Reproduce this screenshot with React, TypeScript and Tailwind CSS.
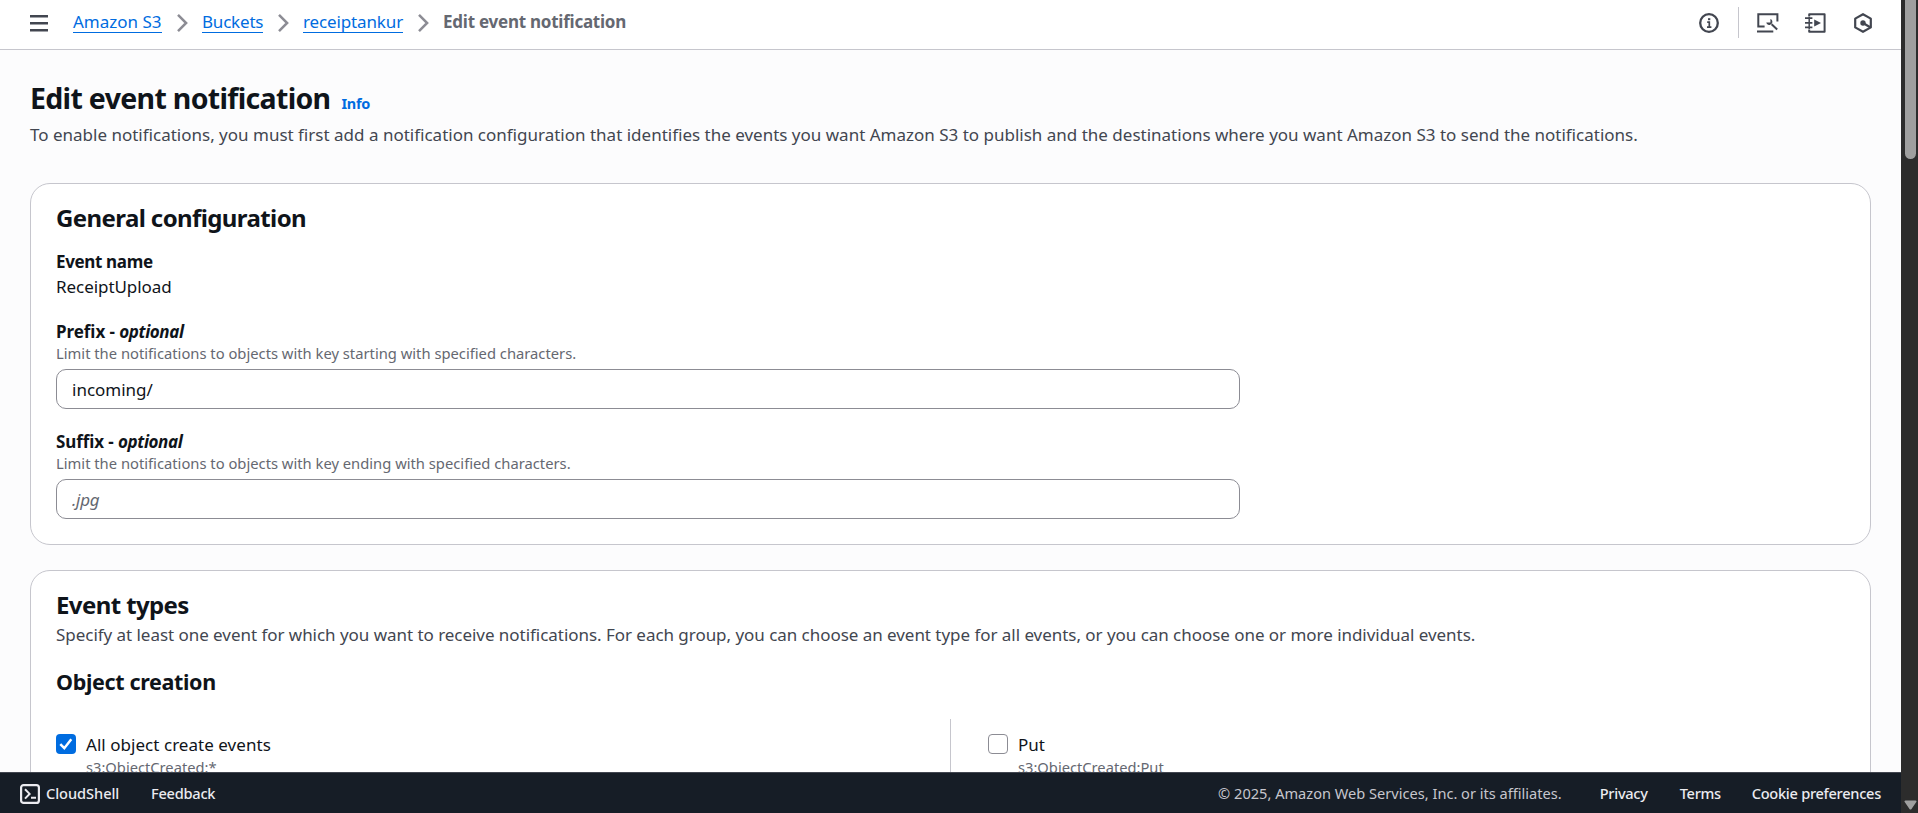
import type { ReactNode } from "react";

function Crumb({ children, className }: { children: ReactNode; className: string }) {
  return (
    <a href="#" className={`block h-[22px] border-b border-[#006ce0] leading-[22px] whitespace-nowrap text-[#006ce0] ${className}`}>
      {children}
    </a>
  );
}

function Chevron({ className }: { className: string }) {
  return (
    <svg className={`h-[20px] w-[20px] shrink-0 ${className}`} viewBox="0 0 16 16" fill="none" stroke="#8c8c94" strokeWidth="2">
      <path d="m4 1.5 6.5 6.5L4 14.5" />
    </svg>
  );
}

function Field({ label, labelClass, hint, value, placeholder }: { label: string; labelClass: string; hint: string; value?: string; placeholder?: string }) {
  return (
    <div>
      <div className={`h-[25px] text-[17px] leading-[25px] font-bold ${labelClass}`}>
        {label} - <i className="tracking-[-0.4px]">optional</i>
      </div>
      <div className="h-[20px] text-[14.75px] leading-[19px] whitespace-nowrap text-[#656871]">{hint}</div>
      <input
        defaultValue={value}
        placeholder={placeholder}
        className="mt-[5px] block h-[40px] w-[1184px] rounded-[10px] border border-[#8c8c94] bg-white px-[15px] text-[17px] text-[#0f141a] outline-none placeholder:tracking-[-0.3px] placeholder:text-[#656871] placeholder:italic"
      />
    </div>
  );
}

function Option({ checked, label, event }: { checked?: boolean; label: string; event: string }) {
  return (
    <div className="flex gap-[10px]">
      {checked ? (
        <span className="mt-[2px] flex h-5 w-5 shrink-0 items-center justify-center rounded-[4px] bg-[#006ce0]">
          <svg className="h-5 w-5" viewBox="0 0 20 20" fill="none" stroke="#fff" strokeWidth="2.5">
            <path d="m4.3 10.2 4 4 7-9" />
          </svg>
        </span>
      ) : (
        <span className="mt-[2px] h-5 w-5 shrink-0 rounded-[4px] border border-[#8c8c94] bg-white" />
      )}
      <div className="whitespace-nowrap">
        <div className="h-[25px] text-[17px] leading-[25px] tracking-[0.04px]">{label}</div>
        <div className="h-[20px] text-[14.7px] leading-[20px] text-[#656871]">{event}</div>
      </div>
    </div>
  );
}

export default function App() {
  return (
    <div className="flex h-[813px] w-[1918px] overflow-hidden bg-[#fcfcfd] font-['Noto_Sans',sans-serif] text-[#0f141a]">
      <div className="flex h-full w-[1901px] flex-col">
        <header className="flex h-[50px] shrink-0 items-start border-b border-[#c6c6cd] bg-white text-[17px]">
          <svg className="mt-[13px] ml-[29px] h-5 w-5" viewBox="0 0 20 20" fill="none" stroke="#424650" strokeWidth="2.5">
            <path d="M1 3.2h18M1 10.2h18M1 17.2h18" />
          </svg>
          <nav className="ml-6 flex pt-[11px]">
            <Crumb className="w-[89px]">Amazon S3</Crumb>
            <Chevron className="mt-[2px] ml-[11px]" />
            <Crumb className="ml-[9px] w-[61px] tracking-[-0.2px]">Buckets</Crumb>
            <Chevron className="mt-[2px] ml-[11px]" />
            <Crumb className="ml-[9px] w-[100px] tracking-[-0.13px]">receiptankur</Crumb>
            <Chevron className="mt-[2px] ml-[11px]" />
            <span className="ml-[9px] leading-[22px] font-bold tracking-[-0.24px] whitespace-nowrap text-[#656871]">Edit event notification</span>
          </nav>
          <div className="mr-[28px] ml-auto flex items-start text-[#424650]">
            <svg className="mt-[13px] h-5 w-5" viewBox="0 0 20 20" fill="none" stroke="currentColor" strokeWidth="2.3">
              <circle cx="10" cy="10" r="8.8" />
              <path d="M10.3 14.6V9.2H8.2M8 14.2h4.4" strokeWidth="1.7" />
              <path d="M9 5.2h2.3v2H9z" fill="currentColor" stroke="none" />
            </svg>
            <span className="mt-[7px] ml-[19px] h-[31px] w-px bg-[#c6c6cd]" />
            <svg className="mt-[12px] ml-[18px] h-[22px] w-[22px]" viewBox="0 0 22 22" fill="none" stroke="currentColor" strokeWidth="2">
              <path d="M20.4 9.5V2.2H1.3v12.4H7.6M0 19.6h16.3" />
              <path d="M14.6 12.2l5.6 5.2" strokeWidth="2" />
              <path d="M13.4 7v3.6H9.3c.3 1.7 2.2 2.8 3.9 2.1 1.9-.7 2.7-2.6 1.9-4.3-.3-.7-.9-1.2-1.7-1.4z" fill="currentColor" stroke="none" />
            </svg>
            <svg className="mt-[12px] ml-[26px] h-[22px] w-[22px]" viewBox="0 0 22 22" fill="none" stroke="currentColor" strokeWidth="2">
              <path d="M4.2 4.5V2.2h15.4v17.6H4.2v-2.3" strokeLinejoin="round" />
              <path d="M4.2 5v12" strokeWidth="1.5" />
              <path d="M0 6.2h7.4M0 10.8h7.4M0 15.4h7.4" strokeWidth="1.7" />
              <path d="m9.2 7.6 6.8 3.4-6.8 3.4z" fill="currentColor" stroke="none" />
            </svg>
            <svg className="mt-[12px] ml-[26px] h-[22px] w-5" viewBox="0 0 20 22" fill="none" stroke="currentColor" strokeWidth="2.2">
              <path d="M10 2.2 17.8 6.6v8.8L10 19.8 2.2 15.4V6.6z" strokeLinejoin="round" />
              <circle cx="10" cy="11" r="2.7" fill="currentColor" stroke="none" />
              <path d="m10 11 7.6 4.4" strokeWidth="2.3" />
            </svg>
          </div>
        </header>

        <main className="min-h-0 flex-1 overflow-hidden px-[30px] pt-[30px]">
          <div className="flex h-[39px] items-baseline whitespace-nowrap">
            <h1 className="text-[28.5px] leading-[36px] font-bold tracking-[-0.68px]">Edit event notification</h1>
            <a href="#" className="ml-[11px] text-[14.5px] leading-[20px] font-bold tracking-[-0.3px] text-[#006ce0]">Info</a>
          </div>
          <p className="mt-[3px] h-[25px] text-[17px] leading-[25px] whitespace-nowrap text-[#424650]">
            To enable notifications, you must first add a notification configuration that identifies the events you want Amazon S3 to publish and the destinations where you want Amazon S3 to send the notifications.
          </p>

          <section className="mt-[36px] h-[362px] rounded-[20px] border border-[#c6c6cd] bg-white px-[25px] pt-[19px]">
            <h2 className="h-[30px] text-[24px] leading-[30px] font-bold tracking-[-0.6px]">General configuration</h2>
            <div className="mt-[16px] h-[25px] text-[17px] leading-[25px] font-bold tracking-[-0.35px]">Event name</div>
            <div className="mb-5 h-[25px] text-[17px] leading-[25px] tracking-[-0.06px]">ReceiptUpload</div>
            <div className="flex flex-col gap-5">
              <Field label="Prefix" labelClass="tracking-[-0.05px]" hint="Limit the notifications to objects with key starting with specified characters." value="incoming/" />
              <Field label="Suffix" labelClass="tracking-[-0.08px]" hint="Limit the notifications to objects with key ending with specified characters." placeholder=".jpg" />
            </div>
          </section>

          <section className="mt-[25px] h-[500px] rounded-[20px] border border-[#c6c6cd] bg-white px-[25px] pt-[19px]">
            <h2 className="h-[30px] text-[24px] leading-[30px] font-bold tracking-[-0.6px]">Event types</h2>
            <p className="mt-[2px] h-[25px] text-[17px] leading-[25px] tracking-[-0.04px] whitespace-nowrap text-[#424650]">
              Specify at least one event for which you want to receive notifications. For each group, you can choose an event type for all events, or you can choose one or more individual events.
            </p>
            <h3 className="mt-[21px] h-[28px] text-[21.5px] leading-[28px] font-bold tracking-[-0.35px]">Object creation</h3>
            <div className="mt-[23px] flex h-[300px]">
              <div className="w-[894px] pt-[13px]">
                <Option checked label="All object create events" event="s3:ObjectCreated:*" />
              </div>
              <div className="border-l border-[#c6c6cd] pt-[13px] pl-[37px]">
                <Option label="Put" event="s3:ObjectCreated:Put" />
              </div>
            </div>
          </section>
        </main>

        <footer className="flex h-[41px] shrink-0 items-center border-t border-[#424650] bg-[#161d26] pt-[2px] pr-5 pl-5 text-[14.6px] font-medium whitespace-nowrap text-[#ebebf0]">
          <svg className="h-5 w-5" viewBox="0 0 20 20" fill="none" stroke="currentColor" strokeWidth="2.2">
            <rect x="1.1" y="1.1" width="17.8" height="17.8" rx="2.5" />
            <path d="m5 5.2 4.6 4.7L5 14.6M11 13.8h5" strokeWidth="2" />
          </svg>
          <span className="ml-[6px] w-[74px] tracking-[-0.05px]">CloudShell</span>
          <span className="ml-[31px] tracking-[-0.25px]">Feedback</span>
          <span className="mr-[38px] ml-auto font-normal text-[#c6c6cd]">© 2025, Amazon Web Services, Inc. or its affiliates.</span>
          <span className="w-[48px] tracking-[-0.28px]">Privacy</span>
          <span className="ml-[32px] w-[42px] tracking-[-0.3px]">Terms</span>
          <span className="ml-[30px] tracking-[-0.28px]">Cookie preferences</span>
        </footer>
      </div>

      <div className="flex h-full w-[17px] flex-col items-center justify-between bg-[#2c2c2c]">
        <div className="ml-px h-[159px] w-[11px] rounded-b-[5.5px] bg-[#9f9f9f]" />
        <svg className="mb-[3px] ml-px h-[10px] w-[13px]" viewBox="0 0 13 10">
          <path d="M1.5.5h10c.9 0 1.3.9.8 1.6L7.5 9c-.5.7-1.5.7-2 0L.7 2.1C.2 1.4.6.5 1.5.5z" fill="#9f9f9f" />
        </svg>
      </div>
    </div>
  );
}
